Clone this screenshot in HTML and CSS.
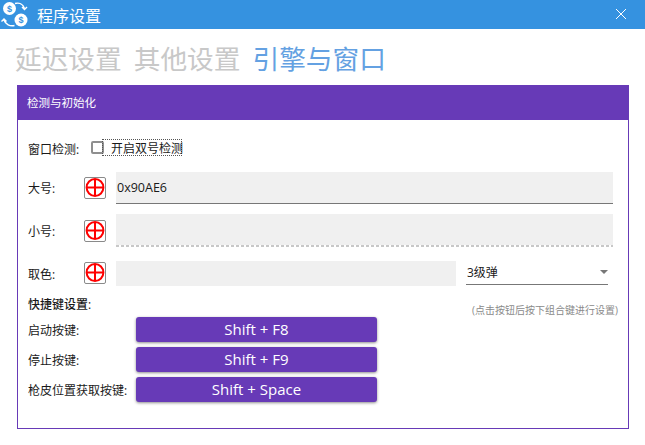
FILE: index.html
```html
<!DOCTYPE html>
<html lang="zh-CN">
<head>
<meta charset="utf-8">
<title>程序设置</title>
<link rel="stylesheet" href="styles.css">
</head>
<body>
<svg width="0" height="0" class="defs">
  <defs>
    <symbol id="target" viewBox="0 0 22 22">
      <circle cx="11" cy="10.500" r="8.400" fill="#fff" stroke="#f00" stroke-width="2"/>
      <path d="M2.500 10.500H19.500M11 2V19" stroke="#f00" stroke-width="2" fill="none"/>
    </symbol>
  </defs>
</svg>
<header class="titlebar">
  <svg class="logo" width="29" height="29" viewBox="0 0 29 29">
    <circle cx="9.500" cy="8.500" r="6.500" fill="#fff"/>
    <circle cx="21" cy="20" r="6.500" fill="#fff"/>
    <text x="9.500" y="11.500" class="logo-s">$</text>
    <text x="21" y="23" class="logo-s">$</text>
    <path d="M15 3.500C19 2.500 23 4 24.500 8.500M22 7l2.500 2.500L27 7" fill="none" stroke="#fff" stroke-width="1.400"/>
    <path d="M14.500 25.500C10 26.500 5.500 24.500 4 20M1.500 21.500L4 19l2.500 2.500" fill="none" stroke="#fff" stroke-width="1.400"/>
  </svg>
  <span class="title">程序设置</span>
  <svg class="close" width="12" height="12" viewBox="0 0 12 12">
    <path d="M1 1L11 11M11 1L1 11" stroke="#fff" stroke-width="1" fill="none"/>
  </svg>
</header>
<nav class="tabs">
  <span class="tab">延迟设置</span>
  <span class="tab">其他设置</span>
  <span class="tab active">引擎与窗口</span>
</nav>
<section class="panel">
  <h2 class="panel-head">检测与初始化</h2>
  <div class="panel-body">
    <div class="row check-row">
      <span class="label">窗口检测:</span>
      <span class="checkbox"></span>
      <span class="check-text">开启双号检测</span>
    </div>
    <div class="row big-row">
      <span class="label short">大号:</span>
      <span class="pick"><svg width="22" height="22"><use href="#target"/></svg></span>
      <div class="field solid">0x90AE6</div>
    </div>
    <div class="row small-row">
      <span class="label short">小号:</span>
      <span class="pick"><svg width="22" height="22"><use href="#target"/></svg></span>
      <div class="field dashed"></div>
    </div>
    <div class="row color-row">
      <span class="label short">取色:</span>
      <span class="pick"><svg width="22" height="22"><use href="#target"/></svg></span>
      <div class="field plain"></div>
      <div class="select"><span>3级弹</span><i class="caret"></i></div>
    </div>
    <div class="hotkey-head">
      <strong>快捷键设置:</strong>
      <span class="hint">(点击按钮后按下组合键进行设置)</span>
    </div>
    <div class="hotkeys">
      <span class="hk-label">启动按键:</span><button class="hk">Shift + F8</button>
      <span class="hk-label">停止按键:</span><button class="hk">Shift + F9</button>
      <span class="hk-label">枪皮位置获取按键:</span><button class="hk">Shift + Space</button>
    </div>
  </div>
</section>
</body>
</html>
```
FILE: styles.css
```css
* { box-sizing: border-box; }
html, body { margin: 0; padding: 0; }
body {
  width: 645px;
  height: 445px;
  overflow: hidden;
  background: #fff;
  color: #1a1a1a;
  font-family: "Open Sans", "Noto Sans CJK SC", sans-serif;
  font-size: 12px;
}
.defs { position: absolute; }
.titlebar {
  height: 29px;
  background: #3592e0;
  display: flex;
  align-items: center;
  color: #fff;
}
.logo { flex: none; }
.logo-s {
  font: bold 9px "Liberation Sans", sans-serif;
  fill: #3592e0;
  text-anchor: middle;
}
.title { margin-left: 8px; font-size: 16px; }
.close { margin-left: auto; margin-right: 18px; margin-top: -1px; }
.tabs {
  height: 56px;
  padding: 11px 0 0 15px;
  display: flex;
  gap: 12px;
  font-size: 26.700px;
  line-height: 38px;
  color: #c8c8c8;
}
.tab.active { color: #64a1e2; }
.panel {
  margin-left: 17px;
  width: 612px;
  height: 344px;
  border: 1px solid #673ab7;
  display: flex;
  flex-direction: column;
}
.panel-head {
  margin: -1px -1px 0;
  height: 35px;
  flex: none;
  background: #673ab7;
  color: #fff;
  font-size: 11.500px;
  font-weight: 400;
  line-height: 35px;
  padding-left: 10px;
}
.panel-body { padding: 0 15px 0 10px; }
.row { display: flex; align-items: center; }
.label { width: 63px; flex: none; }
.label.short { width: 56px; }
.check-row { height: 17px; margin-top: 19px; }
.check-row .label { padding-top: 2px; }
.checkbox {
  width: 13px;
  height: 13px;
  border: 2px solid #8f8f8f;
  border-radius: 2px;
  flex: none;
}
.check-text {
  margin-left: -2px;
  padding-left: 8px;
  width: 80px;
  height: 17px;
  line-height: 18px;
  border: 1px dotted #555;
  white-space: nowrap;
}
.pick {
  width: 22px;
  height: 22px;
  border: 1px solid #8a8a8a;
  border-radius: 2px;
  flex: none;
  display: flex;
  align-items: center;
  justify-content: center;
  margin-right: 10px;
  overflow: hidden;
}
.pick svg { flex: none; }
.field { background: #f0f0f0; flex: 1; }
.big-row { margin-top: 16px; height: 32px; }
.field.solid {
  height: 32px;
  border-bottom: 1px solid #777;
  line-height: 31px;
  padding-left: 1px;
  font-size: 12.500px;
}
.small-row { margin-top: 10px; height: 33px; }
.field.dashed {
  height: 33px;
  background:
    linear-gradient(#f0f0f0, #f0f0f0) top / 100% 31px no-repeat,
    repeating-linear-gradient(90deg, #c8c8c8 0 3px, #fff 3px 5px);
}
.color-row { margin-top: 13px; height: 26px; }
.color-row .label { padding-top: 2px; }
.field.plain { flex: none; width: 340px; height: 25px; }
.select {
  margin: 0 5px 0 10px;
  width: 142px;
  height: 25px;
  border-bottom: 1px solid #777;
  display: flex;
  align-items: center;
  justify-content: space-between;
  padding: 0 0 0 1px;
  align-self: flex-start;
}
.caret {
  width: 0;
  height: 0;
  border: 4px solid transparent;
  border-top-color: #777;
  border-bottom-width: 0;
}
.hotkey-head {
  margin-top: 10px;
  height: 17px;
  display: flex;
  justify-content: space-between;
  align-items: flex-start;
  line-height: 17px;
}
.hotkey-head strong { font-weight: 500; }
.hint {
  font-size: 10px;
  color: #8a8a8a;
  margin-top: 6px;
  margin-right: -5px;
  white-space: nowrap;
}
.hotkeys {
  margin-top: 4px;
  display: grid;
  grid-template-columns: 108px 241px;
  grid-auto-rows: 25px;
  row-gap: 5px;
  align-items: center;
}
.hk {
  height: 25px;
  border: 0;
  border-radius: 3px;
  padding: 0 0 2px;
  background: #673ab7;
  color: #fff;
  font-family: "Open Sans", sans-serif;
  font-size: 15px;
  line-height: 22px;
  box-shadow: 0 1px 3px rgba(0, 0, 0, 0.45);
}
```
